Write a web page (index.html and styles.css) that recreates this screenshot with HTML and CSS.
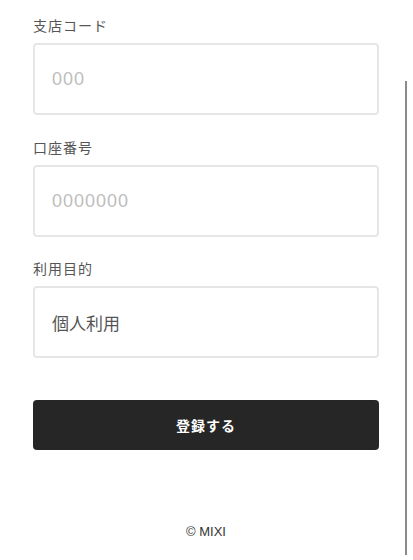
FILE: index.html
```html
<!DOCTYPE html>
<html lang="ja">
<head>
<meta charset="utf-8">
<title>口座登録</title>
<link rel="stylesheet" href="styles.css">
</head>
<body>
<main class="page">
  <form class="form">
    <div class="field">
      <label class="label" for="branch">支店コード</label>
      <input class="input" id="branch" type="text" placeholder="000">
    </div>
    <div class="field">
      <label class="label" for="account">口座番号</label>
      <input class="input" id="account" type="text" placeholder="0000000">
    </div>
    <div class="field">
      <label class="label" for="purpose">利用目的</label>
      <input class="input" id="purpose" type="text" value="個人利用">
    </div>
    <button class="submit" type="button">登録する</button>
  </form>
  <footer class="footer">© MIXI</footer>
</main>
<div class="scroll-indicator"></div>
</body>
</html>
```
FILE: styles.css
```css
html, body {
  margin: 0;
  padding: 0;
  background: #ffffff;
  overflow: hidden;
}
body {
  font-family: "Liberation Sans", "Noto Sans CJK JP", sans-serif;
  color: #333333;
}
.page {
  padding: 16px 34px 0 33px;
}
.form {
  display: flex;
  flex-direction: column;
}
.field {
  display: flex;
  flex-direction: column;
  gap: 7px;
  margin-bottom: 22.5px;
}
.field:last-of-type {
  margin-bottom: 42px;
}
.label {
  font-size: 14px;
  line-height: 20px;
  letter-spacing: 1px;
  color: #555555;
}
.input {
  box-sizing: border-box;
  height: 72px;
  width: 100%;
  margin: 0;
  border: 2px solid #e6e6e6;
  border-radius: 4px;
  padding: 2px 17px 0;
  font-family: inherit;
  font-size: 17px;
  letter-spacing: 0;
  color: #555555;
  background: #ffffff;
  outline: none;
}
.input:not(:placeholder-shown) {
  padding-top: 0;
}
.input::placeholder {
  font-size: 18px;
  letter-spacing: 1px;
  color: #bdbdbd;
}
.submit {
  height: 50px;
  border: none;
  border-radius: 4px;
  background: #262626;
  color: #ffffff;
  font-family: inherit;
  font-size: 14px;
  font-weight: 700;
  letter-spacing: 1px;
  margin: 0;
  padding: 0;
}
.footer {
  margin-top: 74px;
  text-align: center;
  font-size: 13px;
  line-height: 16px;
  color: #333333;
}
.scroll-indicator {
  position: fixed;
  left: 405px;
  top: 81px;
  width: 2px;
  height: 474px;
  background: #8a8a8a;
}
```
